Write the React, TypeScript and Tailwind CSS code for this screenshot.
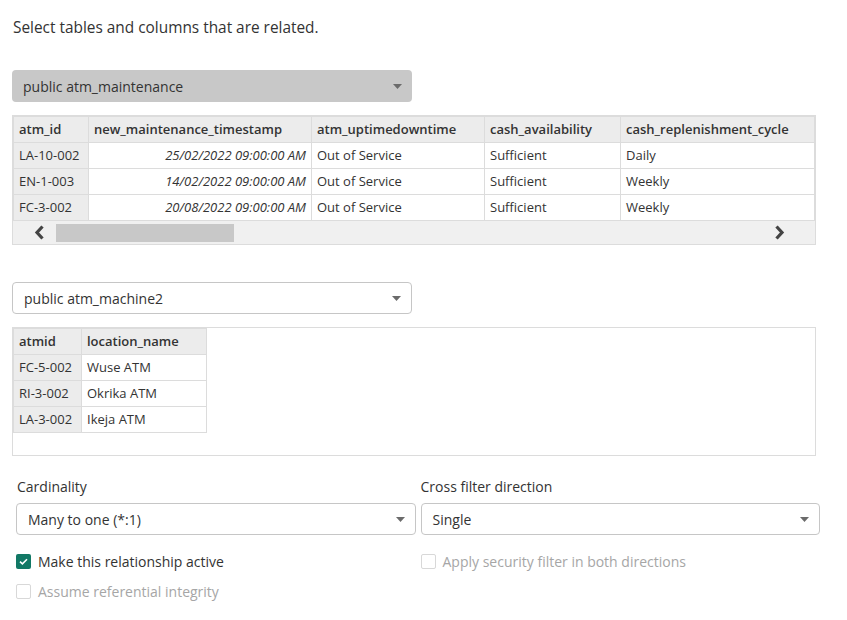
import * as React from 'react'

const font = { fontFamily: '"Open Sans", "Noto Sans", sans-serif' }

function Caret() {
  return (
    <svg width="9" height="5" viewBox="0 0 9 5" className="shrink-0">
      <path d="M0 0 H9 L4.5 5 Z" fill="#6b6b6b" />
    </svg>
  )
}

function Dropdown({ value, muted }: { value: string; muted?: boolean }) {
  return (
    <div
      className={
        'flex h-[32px] items-center justify-between rounded-[4px] pl-[11px] pr-[10px] text-[14px] text-[#333] ' +
        (muted ? 'bg-[#c8c8c8]' : 'border border-[#c6c6c6] bg-white')
      }
    >
      <span>{value}</span>
      <Caret />
    </div>
  )
}

function Checkbox({ checked, disabled, label }: { checked?: boolean; disabled?: boolean; label: string }) {
  return (
    <label className="flex h-[16px] items-center gap-[7px] text-[14px]">
      {checked ? (
        <span className="flex h-[15px] w-[15px] items-center justify-center rounded-[2px] bg-[#117865]">
          <svg width="9" height="7" viewBox="0 0 9 7">
            <path d="M1 3.6 L3.4 5.8 L8 1.2" stroke="white" strokeWidth="1.6" fill="none" />
          </svg>
        </span>
      ) : (
        <span className="h-[15px] w-[15px] rounded-[2px] border border-[#d8d8d8] bg-white" />
      )}
      <span className={disabled ? 'text-[#a6a6a6]' : 'text-[#333]'}>{label}</span>
    </label>
  )
}

const maintenance = [
  ['LA-10-002', '25/02/2022 09:00:00 AM', 'Out of Service', 'Sufficient', 'Daily'],
  ['EN-1-003', '14/02/2022 09:00:00 AM', 'Out of Service', 'Sufficient', 'Weekly'],
  ['FC-3-002', '20/08/2022 09:00:00 AM', 'Out of Service', 'Sufficient', 'Weekly'],
]

const machines = [
  ['FC-5-002', 'Wuse ATM'],
  ['RI-3-002', 'Okrika ATM'],
  ['LA-3-002', 'Ikeja ATM'],
]

const th = 'h-[26px] border border-[#dcdcdc] bg-[#ececec] px-[5px] text-left font-semibold'
const td = 'h-[26px] border border-[#dcdcdc] px-[5px]'

export default function App() {
  return (
    <div className="h-[620px] w-[847px] bg-white text-[#333]" style={font}>
      <div className="px-[13px] pt-[16px]">
        <p className="text-[15.4px] leading-[24px]">Select tables and columns that are related.</p>
      </div>

      <div className="mt-[30px] w-[412px] pl-[12px]">
        <Dropdown value="public atm_maintenance" muted />
      </div>

      <div className="ml-[12px] mt-[13px] w-[804px] border border-[#dcdcdc] bg-[#f0f0f0]">
        <table className="w-full border-collapse text-[13px]">
          <thead>
            <tr>
              <th className={th + ' w-[75px]'}>atm_id</th>
              <th className={th + ' w-[223px]'}>new_maintenance_timestamp</th>
              <th className={th + ' w-[173px]'}>atm_uptimedowntime</th>
              <th className={th + ' w-[136px]'}>cash_availability</th>
              <th className={th}>cash_replenishment_cycle</th>
            </tr>
          </thead>
          <tbody>
            {maintenance.map((r) => (
              <tr key={r[0]}>
                <td className={td + ' bg-[#ececec]'}>{r[0]}</td>
                <td className={td + ' bg-white text-right italic'}>{r[1]}</td>
                <td className={td + ' bg-white'}>{r[2]}</td>
                <td className={td + ' bg-white'}>{r[3]}</td>
                <td className={td + ' bg-white'}>{r[4]}</td>
              </tr>
            ))}
          </tbody>
        </table>
        <div className="flex h-[23px] items-center">
          <div className="flex w-[43px] justify-center pl-[10px]">
            <svg width="11" height="15" viewBox="0 0 11 15">
              <path d="M8.5 1.5 L3 7.5 L8.5 13.5" stroke="#444" strokeWidth="3.2" fill="none" />
            </svg>
          </div>
          <div className="h-[18px] w-[178px] bg-[#c8c8c8]" />
          <div className="flex-1" />
          <div className="flex w-[50px] justify-center pr-[22px]">
            <svg width="11" height="15" viewBox="0 0 11 15">
              <path d="M2.5 1.5 L8 7.5 L2.5 13.5" stroke="#444" strokeWidth="3.2" fill="none" />
            </svg>
          </div>
        </div>
      </div>

      <div className="mt-[37px] w-[412px] pl-[12px]">
        <Dropdown value="public atm_machine2" />
      </div>

      <div className="ml-[12px] mt-[13px] h-[129px] w-[804px] border border-[#dcdcdc] bg-white">
        <table className="border-collapse text-[13px]">
          <thead>
            <tr>
              <th className={th + ' w-[68px]'}>atmid</th>
              <th className={th + ' w-[125px]'}>location_name</th>
            </tr>
          </thead>
          <tbody>
            {machines.map((r) => (
              <tr key={r[0]}>
                <td className={td + ' bg-[#ececec]'}>{r[0]}</td>
                <td className={td + ' bg-white'}>{r[1]}</td>
              </tr>
            ))}
          </tbody>
        </table>
      </div>

      <div className="mt-[21px] grid grid-cols-2 gap-[5px] pl-[16px] pr-[27px]">
        <div className="flex flex-col">
          <span className="pl-[1px] text-[14px] leading-[20px]">Cardinality</span>
          <div className="mt-[6px]">
            <Dropdown value="Many to one (*:1)" />
          </div>
          <div className="mt-[18px] flex flex-col gap-[14px]">
            <Checkbox checked label="Make this relationship active" />
            <Checkbox disabled label="Assume referential integrity" />
          </div>
        </div>
        <div className="flex flex-col">
          <span className="text-[14px] leading-[20px]">Cross filter direction</span>
          <div className="mt-[6px]">
            <Dropdown value="Single" />
          </div>
          <div className="mt-[18px]">
            <Checkbox disabled label="Apply security filter in both directions" />
          </div>
        </div>
      </div>
    </div>
  )
}
